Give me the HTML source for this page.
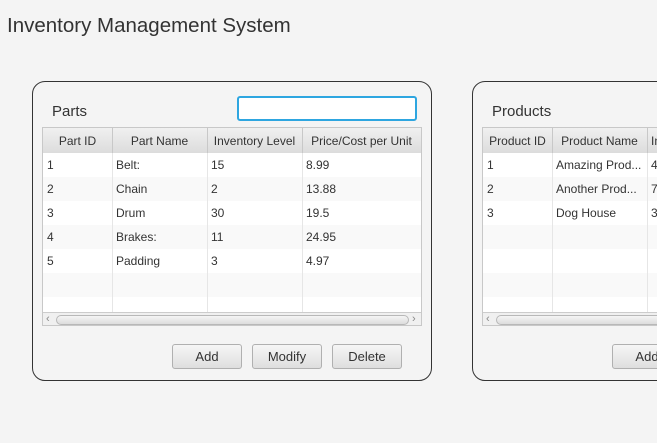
<!DOCTYPE html>
<html><head><style>
body{margin:0;width:657px;height:443px;background:#f4f4f4;overflow:hidden;position:relative;font-family:"Liberation Sans",sans-serif;color:#333}
.a{position:absolute}
.title{left:7px;top:14px;font-size:20.5px;color:#333;white-space:nowrap}
.box{border:1px solid #333;border-radius:13px;background:#f4f4f4}
.lbl{font-size:15px;color:#333}
.tbl{border:1px solid #c8c8c8;background:#fff;overflow:hidden}
.hdr{position:absolute;left:0;top:0;height:25px;background:linear-gradient(#f0f0f0,#dcdcdc);border-bottom:1px solid #c8c8c8;width:100%}
.c{position:absolute;font-size:12px;white-space:nowrap;overflow:hidden}
.h{text-align:center;top:6px}
.vl{position:absolute;top:0;width:1px;background:#e6e6e6}
.hl{position:absolute;top:0;width:1px;background:#c8c8c8;height:25px}
.row{position:absolute;left:0;width:100%;height:24px;border-bottom:1px solid #ececec}
.btn{border:1px solid #b0b0b0;border-radius:3px;background:linear-gradient(#f6f6f6,#dedede);font-size:13px;text-align:center;line-height:23px;color:#333}
.sb{position:absolute;left:0;width:100%;height:13px;background:#f0f0f0;border-top:1px solid #ccc}
</style></head><body>
<div class="a title">Inventory Management System</div>

<div class="a box" style="left:32px;top:81px;width:398px;height:298px"></div>
<div class="a lbl" style="left:52px;top:103px">Parts</div>
<div class="a" style="left:237px;top:96px;border:2px solid #2ea6e0;border-radius:3px;background:#fff;width:176px;height:21px"></div>
<div class="a tbl" style="left:42px;top:127px;width:378px;height:197px">
 <div class="hdr"></div>
 <div class="row" style="top:25px;background:#fff"></div>
 <div class="row" style="top:49px;background:#f9f9f9"></div>
 <div class="row" style="top:73px;background:#fff"></div>
 <div class="row" style="top:97px;background:#f9f9f9"></div>
 <div class="row" style="top:121px;background:#fff"></div>
 <div class="row" style="top:145px;background:#f9f9f9"></div>
 <div class="row" style="top:169px;background:#fff"></div>
 <div class="vl" style="left:69px;height:185px"></div><div class="vl" style="left:164px;height:185px"></div><div class="vl" style="left:259px;height:185px"></div>
 <div class="hl" style="left:69px"></div><div class="hl" style="left:164px"></div><div class="hl" style="left:259px"></div>
 <div class="c h" style="left:0;width:69px">Part ID</div>
 <div class="c h" style="left:69px;width:95px">Part Name</div>
 <div class="c h" style="left:164px;width:95px">Inventory Level</div>
 <div class="c h" style="left:259px;width:119px">Price/Cost per Unit</div>
 <div class="c" style="left:4px;top:30px">1</div><div class="c" style="left:73px;top:30px">Belt:</div><div class="c" style="left:168px;top:30px">15</div><div class="c" style="left:263px;top:30px">8.99</div>
 <div class="c" style="left:4px;top:54px">2</div><div class="c" style="left:73px;top:54px">Chain</div><div class="c" style="left:168px;top:54px">2</div><div class="c" style="left:263px;top:54px">13.88</div>
 <div class="c" style="left:4px;top:78px">3</div><div class="c" style="left:73px;top:78px">Drum</div><div class="c" style="left:168px;top:78px">30</div><div class="c" style="left:263px;top:78px">19.5</div>
 <div class="c" style="left:4px;top:102px">4</div><div class="c" style="left:73px;top:102px">Brakes:</div><div class="c" style="left:168px;top:102px">11</div><div class="c" style="left:263px;top:102px">24.95</div>
 <div class="c" style="left:4px;top:126px">5</div><div class="c" style="left:73px;top:126px">Padding</div><div class="c" style="left:168px;top:126px">3</div><div class="c" style="left:263px;top:126px">4.97</div>
 <div class="sb" style="top:184px"><div class="a" style="left:3px;top:0;font-size:11px;color:#888">&lsaquo;</div><div class="a" style="left:13px;top:2px;width:351px;height:8px;border:1px solid #b8b8b8;border-radius:5px;background:linear-gradient(#f4f4f4,#dcdcdc)"></div><div class="a" style="left:369px;top:0;font-size:11px;color:#888">&rsaquo;</div></div>
</div>
<div class="a btn" style="left:172px;top:344px;width:68px;height:23px">Add</div>
<div class="a btn" style="left:252px;top:344px;width:68px;height:23px">Modify</div>
<div class="a btn" style="left:332px;top:344px;width:68px;height:23px">Delete</div>

<div class="a box" style="left:472px;top:81px;width:250px;height:298px"></div>
<div class="a lbl" style="left:492px;top:103px">Products</div>
<div class="a tbl" style="left:482px;top:127px;width:250px;height:197px">
 <div class="hdr"></div>
 <div class="row" style="top:25px;background:#fff"></div>
 <div class="row" style="top:49px;background:#f9f9f9"></div>
 <div class="row" style="top:73px;background:#fff"></div>
 <div class="row" style="top:97px;background:#f9f9f9"></div>
 <div class="row" style="top:121px;background:#fff"></div>
 <div class="row" style="top:145px;background:#f9f9f9"></div>
 <div class="row" style="top:169px;background:#fff"></div>
 <div class="vl" style="left:69px;height:185px"></div><div class="vl" style="left:164px;height:185px"></div>
 <div class="hl" style="left:69px"></div><div class="hl" style="left:164px"></div>
 <div class="c h" style="left:0;width:69px">Product ID</div>
 <div class="c h" style="left:69px;width:95px">Product Name</div>
 <div class="c h" style="left:168px;width:30px;text-align:left">Inventory</div>
 <div class="c" style="left:4px;top:30px">1</div><div class="c" style="left:73px;top:30px">Amazing Prod...</div><div class="c" style="left:168px;top:30px">4</div>
 <div class="c" style="left:4px;top:54px">2</div><div class="c" style="left:73px;top:54px">Another Prod...</div><div class="c" style="left:168px;top:54px">7</div>
 <div class="c" style="left:4px;top:78px">3</div><div class="c" style="left:73px;top:78px">Dog House</div><div class="c" style="left:168px;top:78px">3</div>
 <div class="sb" style="top:184px"><div class="a" style="left:3px;top:0;font-size:11px;color:#888">&lsaquo;</div><div class="a" style="left:13px;top:2px;width:300px;height:8px;border:1px solid #b8b8b8;border-radius:5px;background:linear-gradient(#f4f4f4,#dcdcdc)"></div></div>
</div>
<div class="a btn" style="left:612px;top:344px;width:68px;height:23px">Add</div>
</body></html>
